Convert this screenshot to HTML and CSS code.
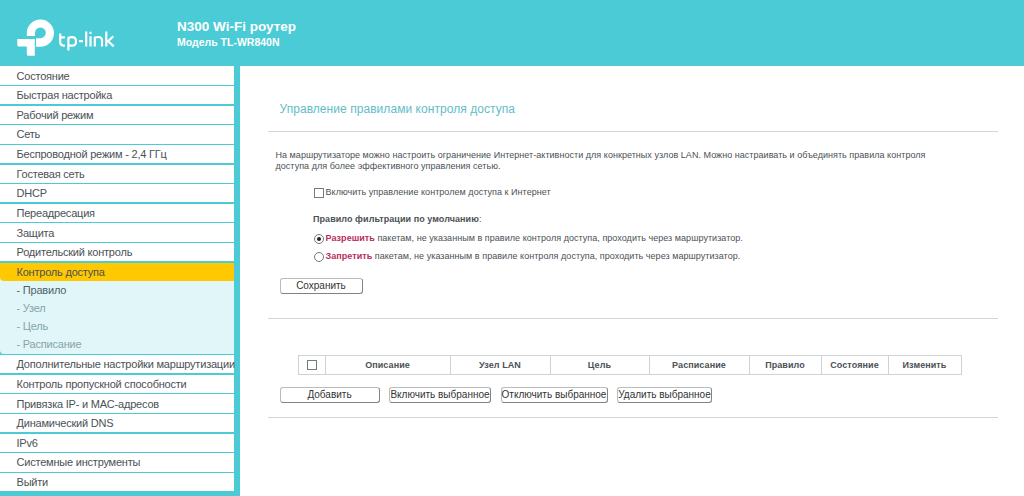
FILE: index.html
```html
<!DOCTYPE html>
<html lang="ru">
<head>
<meta charset="utf-8">
<title>TL-WR840N</title>
<link rel="stylesheet" href="styles.css">
</head>
<body>
<header class="header">
  <svg class="logo" width="100" height="40" viewBox="17 18 100 40" aria-label="tp-link">
    <g fill="#fff">
      <path d="M26.8 36v-3.4a13.6 13.6 0 1 1 13.6 14.1H36V38.2h4.4a5.4 5.4 0 1 0-5.4-5.4V36z"/>
      <path d="M17.3 39H34.8V55.8H28.4a1.6 1.6 0 0 1-1.6-1.6V46.5H18.9a1.6 1.6 0 0 1-1.6-1.6z"/>
    </g>
    <g fill="none" stroke="#fff" stroke-width="2.2" stroke-linejoin="round">
      <path d="M60.2 33.5v8.6q0 3.5 3.2 3.5h1.5M60.2 37.4h4.7"/>
      <path d="M68.4 50.6V37.7q1.6-.6 3.6-.6 4 0 4 4.3t-4 4.3q-2 0-3.6-.6"/>
      <path d="M79 41.2h4M86.2 31.5v15.1M90.5 36.3v10.3M90.5 31.8v2.2M94.8 46.6v-9q2-.6 3.6-.6 3.6 0 3.6 3.4v6.2M106.3 31.5v15.1M113.3 36.3l-5.2 4.9 5.6 5.2M106.3 41.2h2"/>
    </g>
  </svg>
  <div class="titles">
    <h1 class="product"><span>N300 Wi-Fi роутер</span></h1>
    <p class="model"><span>Модель TL-WR840N</span></p>
  </div>
</header>
<div class="page">
  <nav class="menu">
    <a class="item"><span>Состояние</span></a>
    <a class="item"><span>Быстрая настройка</span></a>
    <a class="item"><span>Рабочий режим</span></a>
    <a class="item"><span>Сеть</span></a>
    <a class="item"><span>Беспроводной режим - 2,4 ГГц</span></a>
    <a class="item"><span>Гостевая сеть</span></a>
    <a class="item"><span>DHCP</span></a>
    <a class="item"><span>Переадресация</span></a>
    <a class="item"><span>Защита</span></a>
    <a class="item"><span>Родительский контроль</span></a>
    <div class="group">
      <a class="item active"><span>Контроль доступа</span></a>
      <a class="sub current">- Правило</a>
      <a class="sub">- Узел</a>
      <a class="sub">- Цель</a>
      <a class="sub">- Расписание</a>
    </div>
    <a class="item"><span>Дополнительные настройки маршрутизации</span></a>
    <a class="item"><span>Контроль пропускной способности</span></a>
    <a class="item"><span>Привязка IP- и MAC-адресов</span></a>
    <a class="item"><span>Динамический DNS</span></a>
    <a class="item"><span>IPv6</span></a>
    <a class="item"><span>Системные инструменты</span></a>
    <a class="item"><span>Выйти</span></a>
  </nav>
  <main class="content">
    <h2 class="heading"><span>Управление правилами контроля доступа</span></h2>
    <section class="settings">
      <p class="intro">На маршрутизаторе можно настроить ограничение Интернет-активности для конкретных узлов LAN. Можно настраивать и объединять правила контроля<br>доступа для более эффективного управления сетью.</p>
      <label class="option enable"><i class="box"></i><span>Включить управление контролем доступа к Интернет</span></label>
      <p class="rule-title"><b>Правило фильтрации по умолчанию</b>:</p>
      <label class="option"><i class="radio checked"></i><span><b class="key">Разрешить</b> пакетам, не указанным в правиле контроля доступа, проходить через маршрутизатор.</span></label>
      <label class="option"><i class="radio"></i><span><b class="key">Запретить</b> пакетам, не указанным в правиле контроля доступа, проходить через маршрутизатор.</span></label>
      <button class="btn save">Сохранить</button>
    </section>
    <section class="rules">
      <div class="table">
        <div class="cell"><i class="box"></i></div>
        <div class="cell">Описание</div>
        <div class="cell">Узел LAN</div>
        <div class="cell">Цель</div>
        <div class="cell">Расписание</div>
        <div class="cell">Правило</div>
        <div class="cell">Состояние</div>
        <div class="cell">Изменить</div>
      </div>
      <div class="actions">
        <button class="btn">Добавить</button>
        <button class="btn">Включить выбранное</button>
        <button class="btn">Отключить выбранное</button>
        <button class="btn">Удалить выбранное</button>
      </div>
    </section>
  </main>
</div>
</body>
</html>
```
FILE: styles.css
```css
* { box-sizing: border-box; }
body {
  margin: 0;
  height: 496px;
  overflow: hidden;
  background: #4acbd6;
  font-family: "Liberation Sans", Arial, sans-serif;
  color: #4b5156;
}
h1, h2, p { margin: 0; }
.header { display: flex; height: 66px; padding: 18px 0 0 17px; }
.titles { margin-left: 60px; color: #fff; white-space: nowrap; }
.product { font-size: 13.5px; line-height: 17px; }
.model { margin-top: 1px; font-size: 10.5px; line-height: 13px; font-weight: bold; }
.page { display: flex; height: 430px; }
.menu { display: flex; flex-direction: column; gap: 1.4px; width: 234px; flex: none; padding-top: 0.4px; }
.item {
  display: flex;
  align-items: center;
  height: 18.24px;
  padding-left: 16.5px;
  background: #fff;
  font-size: 11px;
  letter-spacing: -0.21px;
  white-space: nowrap;
}
.group { background: #e1f6f8; border-bottom-left-radius: 4px; height: 91.2px; }
.active { background: #ffc800; border-bottom-left-radius: 4px; height: 18.5px; }
.sub { display: block; height: 18.1px; padding-left: 16.5px; font-size: 11px; line-height: 18px; letter-spacing: -0.21px; color: #87a4a9; white-space: nowrap; }
.current { color: #4c6267; }
.content { flex: 1; margin-left: 6px; padding: 0 26px 0 28px; background: #fff; }
.heading {
  height: 66px;
  padding: 35px 0 0 11.5px;
  border-bottom: 1px solid #d3d7d7;
  font-size: 12px;
  line-height: 16px;
  letter-spacing: 0.055px;
  font-weight: normal;
  color: #62bdc6;
}
.settings { height: 187px; padding: 18px 0 0 7.5px; border-bottom: 1px solid #d3d7d7; }
.intro { font-size: 9px; line-height: 10.7px; letter-spacing: 0.037px; white-space: nowrap; }
.option { display: flex; align-items: center; height: 18px; padding-left: 38px; gap: 2px; font-size: 9px; letter-spacing: 0.045px; white-space: nowrap; }
.option span { padding-bottom: 2px; }
.enable { margin-top: 13px; }
.box, .radio { width: 10px; height: 10px; flex: none; border: 1px solid #747b7d; background: #fff; }
.radio { display: flex; border-radius: 50%; }
.checked::after { content: ""; width: 4px; height: 4px; margin: auto; border-radius: 50%; background: #222; }
.rule-title { height: 13px; margin: 11px 0 4px 37.5px; font-size: 9px; line-height: 13px; letter-spacing: 0.06px; }
.key { color: #b82d63; }
.btn {
  height: 16px;
  padding: 0;
  border: 1px solid #b9bdbe;
  border-right-color: #808486;
  border-bottom-color: #808486;
  border-radius: 3px;
  background: #fff;
  color: #333;
  font: 10px/14px "Liberation Sans", Arial, sans-serif;
  white-space: nowrap;
}
.save { display: block; width: 83px; margin: 12px 0 0 4px; }
.rules { height: 99px; padding-top: 36px; border-bottom: 1px solid #d3d7d7; }
.table {
  display: grid;
  grid-template-columns: 26px 125px 100px 99px 100px 72px 67px 73px;
  width: 664px;
  height: 20px;
  margin-left: 30px;
  border: 1px solid #cfd3d3;
}
.cell { display: flex; align-items: center; justify-content: center; padding-right: 1px; font-size: 9px; font-weight: bold; letter-spacing: 0.08px; border-left: 1px solid #cfd3d3; }
.cell:first-child { border-left: 0; padding-right: 0; }
.actions { display: grid; grid-template-columns: 100px 102px 107px 95px; gap: 9.5px; margin: 12px 0 0 11.5px; }
```
